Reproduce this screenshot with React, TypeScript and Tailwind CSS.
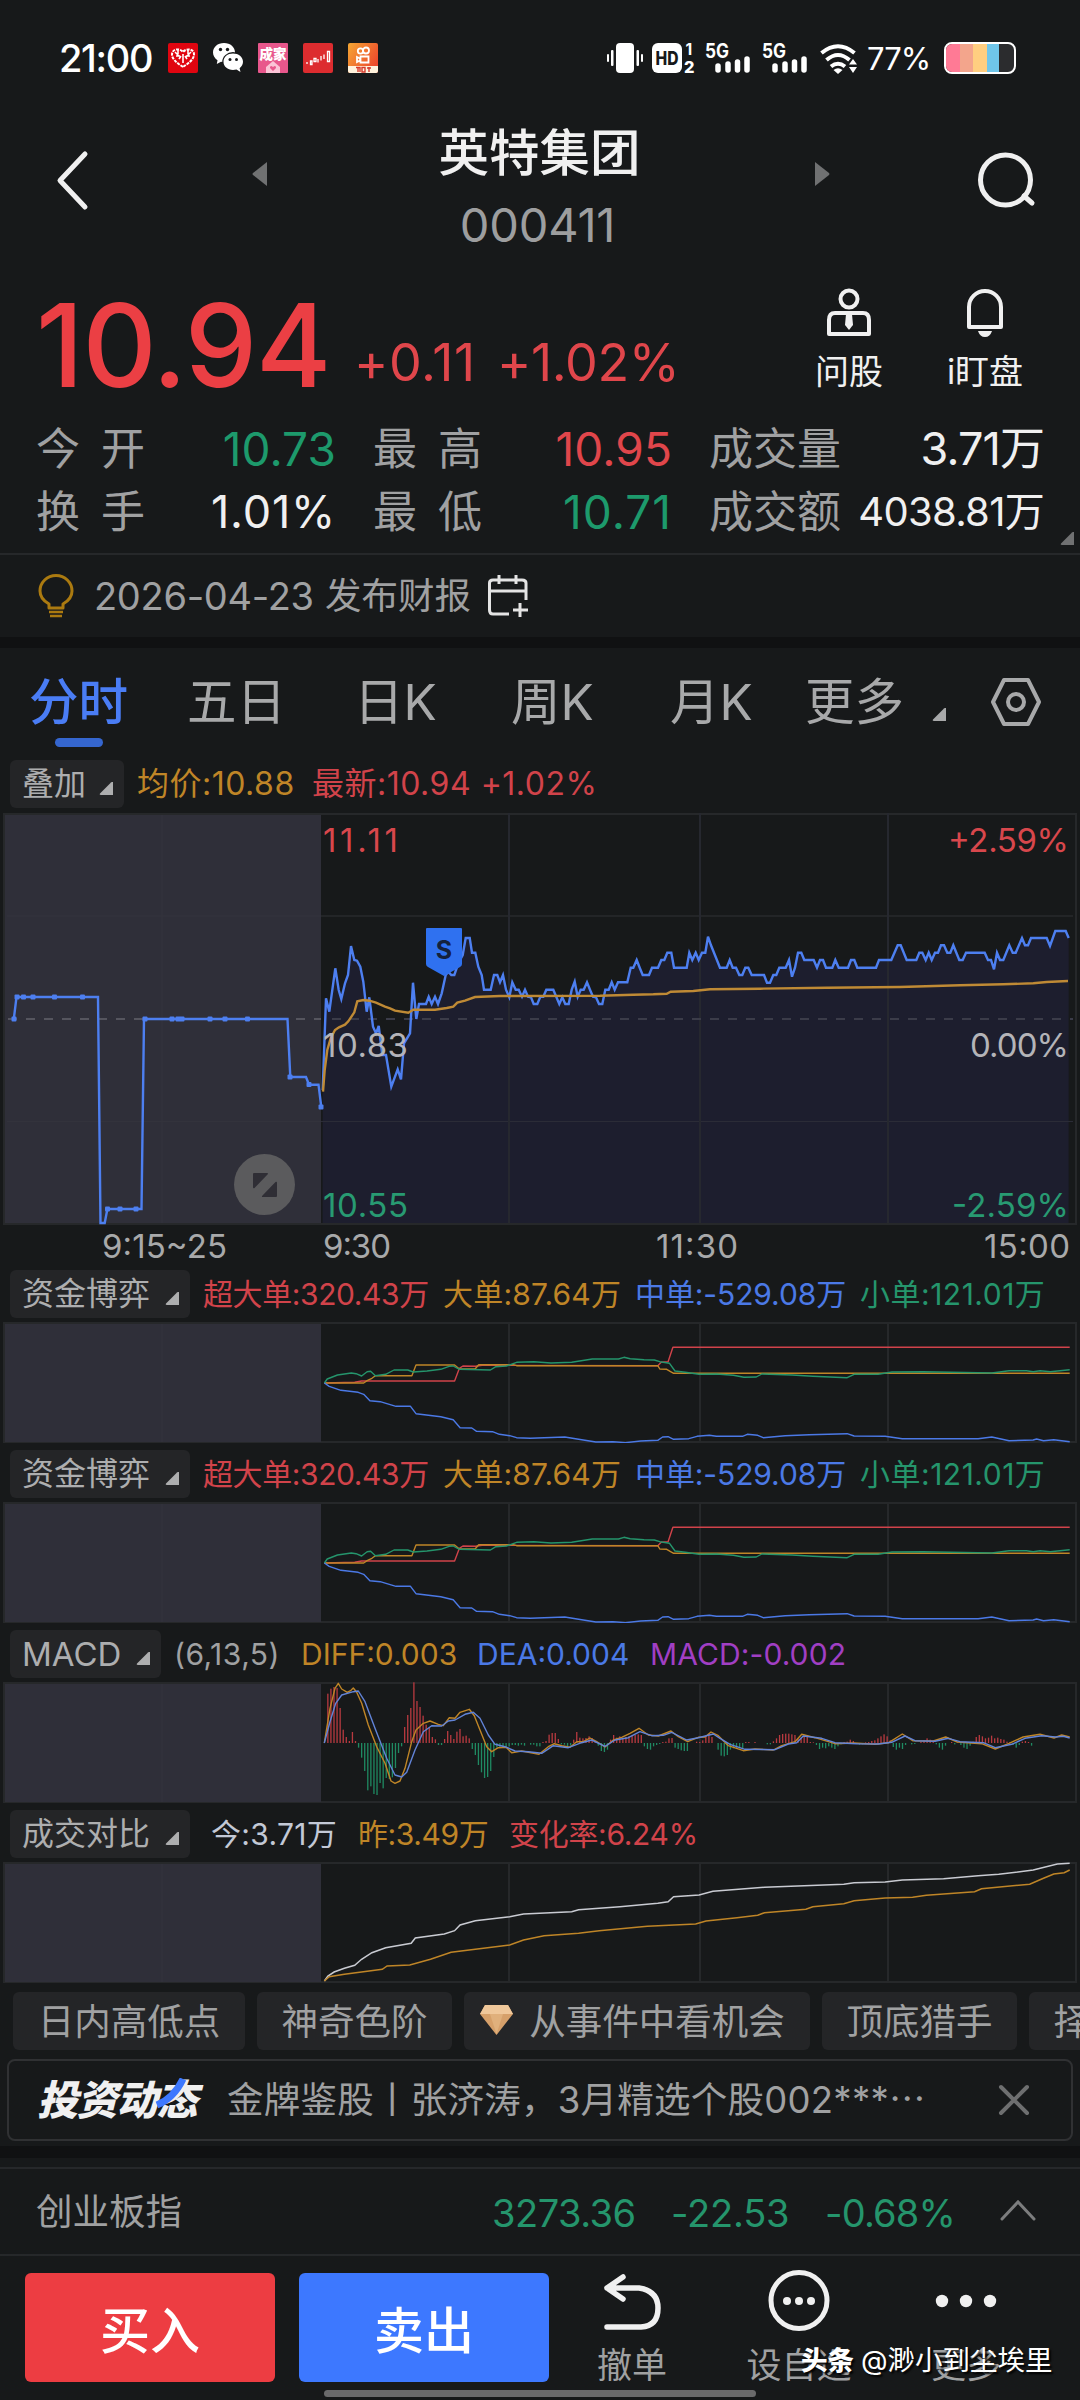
import React from "react";

type Legend = { text: string; className: string };

// Flat [x, y, x, y, ...] list to an svg path, scaled into chart units.
const toPath = (pts: number[], x0: number, sx: number, y0: number, sy: number): string => {
  let d = "";
  for (let i = 0; i < pts.length; i += 2) {
    const x = (x0 + pts[i] * sx).toFixed(1);
    const y = (y0 + pts[i + 1] * sy).toFixed(1);
    d += `${i === 0 ? "M" : "L"}${x} ${y}`;
  }
  return d;
};

const auction = [
  13.8, 206, 16.5, 184, 98, 184, 100.5, 410, 104.7, 410, 107.4, 396, 141.5, 396, 144, 206, 287.5,
  206, 290.3, 264, 306, 264, 309, 271.7, 318.5, 271.7, 321.3, 294,
];

const auctionDots = [
  [14, 206], [17, 184], [23.5, 184], [33, 184], [54.5, 184], [82.5, 184], [107.5, 396],
  [120, 396], [136, 396], [145, 206], [172, 206], [178, 206], [182, 206], [210, 206],
  [225, 206], [247.5, 206], [290, 264], [309, 271.5], [321, 294],
];

const price = [
  68, 870, 78, 595, 88, 635, 106, 505, 116, 570, 124, 597, 135, 550, 144, 525, 153, 438, 163, 480,
  171, 482, 181, 500, 190, 545, 200, 635, 208, 592, 219, 680, 228, 700, 236, 678, 247, 765, 258,
  765, 274, 860, 293, 808, 303, 838, 312, 730, 330, 700, 339, 548, 349, 657, 357, 612, 378, 612,
  386, 590, 395, 612, 405, 590, 414, 612, 425, 580, 437, 525, 445, 515, 454, 525, 463, 525, 475,
  490, 488, 465, 497, 414, 509, 414, 516, 458, 526, 458, 535, 500, 545, 525, 552, 569, 572, 569,
  582, 525, 592, 525, 600, 547, 609, 525, 618, 569, 628, 592, 637, 547, 647, 569, 656, 569, 666,
  590, 675, 569, 684, 590, 693, 592, 701, 612, 712, 612, 721, 590, 730, 590, 739, 569, 760, 569,
  778, 612, 787, 592, 796, 612, 806, 612, 815, 569, 824, 545, 833, 590, 842, 569, 851, 569, 861,
  547, 870, 569, 879, 590, 888, 592, 897, 612, 907, 612, 916, 569, 926, 569, 935, 547, 944, 569,
  954, 547, 982, 547, 992, 503, 1000, 503, 1010, 480, 1019, 503, 1028, 525, 1047, 525, 1056, 503,
  1074, 503, 1084, 480, 1093, 480, 1102, 458, 1114, 458, 1122, 503, 1160, 503, 1168, 458, 1177,
  480, 1187, 458, 1196, 480, 1206, 458, 1216, 458, 1224, 410, 1233, 436, 1242, 458, 1260, 503,
  1280, 503, 1289, 480, 1298, 503, 1308, 503, 1318, 525, 1327, 525, 1336, 503, 1345, 503, 1355,
  525, 1392, 525, 1401, 548, 1410, 548, 1420, 525, 1429, 525, 1438, 503, 1457, 503, 1467, 480,
  1476, 530, 1485, 503, 1494, 458, 1504, 458, 1513, 480, 1541, 480, 1551, 503, 1560, 480, 1569,
  480, 1578, 503, 1597, 503, 1606, 480, 1616, 503, 1644, 503, 1653, 480, 1663, 480, 1672, 503,
  1728, 503, 1737, 480, 1774, 480, 1793, 436, 1802, 436, 1820, 480, 1849, 480, 1858, 458, 1867,
  458, 1877, 480, 1886, 458, 1895, 480, 1905, 458, 1914, 458, 1923, 436, 1932, 436, 1942, 458,
  1951, 458, 1960, 436, 1978, 480, 1988, 480, 1998, 458, 2054, 458, 2064, 480, 2073, 480, 2082,
  508, 2091, 458, 2100, 480, 2110, 480, 2128, 436, 2138, 458, 2147, 458, 2166, 414, 2175, 436,
  2184, 436, 2193, 414, 2240, 414, 2250, 438, 2266, 393, 2297, 393, 2306, 414,
];

const average = [
  69, 875, 74, 810, 82, 750, 92, 715, 105, 690, 117, 682, 135, 674, 145, 664, 163, 637, 172, 604,
  190, 600, 208, 602, 228, 608, 255, 620, 270, 625, 285, 632, 325, 638, 340, 629, 405, 629, 440,
  624, 460, 620, 472, 608, 495, 602, 525, 591, 600, 588, 900, 587, 1000, 584, 1060, 583, 1100, 581,
  1112, 575, 1180, 573, 1230, 568, 1380, 566, 1580, 563, 1800, 561, 1980, 556, 2110, 553, 2200,
  550, 2240, 546, 2304, 543,
];

const flowRed = [
  471, 354, 515, 352, 525, 348, 660, 348, 667, 310, 672, 303, 690, 304, 700, 301, 955, 302, 960,
  292, 970, 290, 977, 247, 1553, 247,
];
const flowOrange = [
  471, 354, 528, 354, 533, 347, 540, 340, 545, 332, 598, 332, 604, 300, 660, 300, 667, 312, 690,
  311, 695, 299, 745, 299, 750, 302, 955, 302, 958, 312, 968, 313, 978, 325, 1553, 325,
];
const flowGreen = [
  471, 354, 475, 342, 490, 330, 510, 324, 517, 326, 525, 333, 533, 320, 538, 319, 545, 332, 560,
  328, 572, 315, 592, 315, 600, 321, 620, 318, 640, 313, 652, 304, 658, 303, 667, 313, 712, 315,
  720, 305, 735, 303, 750, 292, 775, 290, 800, 294, 830, 292, 860, 282, 898, 282, 906, 277, 915,
  281, 935, 284, 950, 285, 958, 290, 972, 295, 980, 318, 995, 322, 1015, 328, 1040, 327, 1065, 331,
  1080, 337, 1098, 336, 1106, 327, 1150, 330, 1180, 334, 1230, 338, 1240, 328, 1275, 328, 1295,
  321, 1340, 320, 1440, 324, 1465, 317, 1490, 317, 1500, 320, 1510, 317, 1525, 320, 1553, 314,
];
const flowBlue = [
  471, 354, 478, 364, 495, 376, 520, 382, 528, 388, 537, 407, 552, 410, 575, 424, 596, 424, 604,
  446, 640, 455, 658, 464, 668, 488, 685, 489, 692, 499, 715, 500, 725, 508, 740, 512, 750, 518,
  770, 520, 820, 516, 840, 523, 865, 531, 890, 530, 908, 533, 930, 528, 955, 526, 962, 516, 970,
  515, 978, 523, 1000, 521, 1012, 514, 1030, 511, 1040, 514, 1078, 514, 1085, 508, 1100, 511, 1108,
  518, 1140, 512, 1175, 509, 1230, 506, 1240, 513, 1285, 514, 1310, 521, 1420, 521, 1440, 516,
  1465, 527, 1500, 525, 1505, 522, 1515, 527, 1530, 524, 1553, 530,
];

const macdBars = [
  148, 163, 168, 165, 105, 40, 18, 6, 33, 6, -14, -44, -84, -142, -130, -153, -156, -120, -136,
  -105, -108, -103, -75, -30, -10, 48, 84, 105, 182, 126, 108, 82, 55, 45, 18, 11, -6, -6, 12, 36,
  24, 12, 34, 42, 20, 22, 14, -18, -36, -66, -88, -105, -102, -84, -42, -14, -14, -10, -12, -10,
  -6, -6, -8, -5, -8, 0, -5, -5, -10, -10, 3, 6, 25, 30, 30, 12, -4, -5, -10, -8, 10, 33, 16, 14,
  15, 20, 15, 5, -8, -24, -27, -20, 10, 24, 16, 20, 15, 18, 20, 22, 24, 26, 24, -10, -18, -20,
  -10, -6, -3, 3, 4, 14, 15, -14, -18, -22, -24, -24, 0, 0, 4, 3, 8, 22, 28, 18, 0, -20, -38, -40,
  -36, -20, -16, -15, -16, -15, 3, 3, 0, 3, 0, 0, 0, -4, -4, 5, 14, 24, 27, 28, 28, 26, 24, 14,
  16, 18, 18, 3, 2, -6, -18, -14, -16, -10, -14, -18, -10, -4, 3, 4, 10, 6, -3, -5, -4, 2, 3, 6, 8,
  14, 20, 26, 20, 8, -12, -20, -14, -18, -6, 0, -4, -3, 0, 4, 8, 14, 10, 3, -4, -14, -20, -8, 0, 3,
  -4, 2, -6, -14, -18, -8, 4, 18, 24, 20, 14, 16, 22, 14, 16, 12, 10, 4, 3, -6, -14, -6, 4, 6, 3,
  -8,
];
const macdDiff = [
  28, 204, 45, 100, 60, 40, 70, 25, 80, 42, 97, 52, 108, 46, 115, 39, 125, 52, 140, 85, 160, 150,
  185, 215, 210, 265, 228, 318, 240, 325, 255, 318, 270, 280, 290, 200, 303, 165, 325, 145, 345,
  138, 370, 148, 385, 152, 403, 128, 420, 130, 435, 112, 463, 103, 478, 122, 495, 165, 515, 215,
  530, 230, 550, 218, 573, 217, 590, 233, 620, 228, 672, 238, 700, 215, 718, 206, 740, 212, 765,
  217, 785, 200, 805, 200, 825, 189, 845, 200, 870, 216, 895, 195, 920, 187, 945, 175, 972, 160,
  1000, 180, 1030, 183, 1068, 168, 1090, 185, 1118, 200, 1150, 187, 1170, 186, 1188, 171, 1210,
  182, 1240, 212, 1285, 227, 1320, 222, 1375, 225, 1400, 212, 1440, 200, 1460, 178, 1500, 188,
  1560, 206, 1617, 204, 1680, 208, 1721, 203, 1762, 177, 1793, 197, 1855, 198, 1892, 186, 1927,
  201, 2000, 206, 2041, 222, 2082, 205, 2124, 186, 2175, 178, 2217, 189, 2240, 180, 2264, 186,
];
const macdDea = [
  28, 204, 45, 140, 62, 85, 80, 60, 115, 50, 130, 48, 150, 80, 180, 160, 215, 250, 240, 300, 260,
  306, 275, 292, 300, 225, 325, 170, 350, 152, 380, 153, 400, 138, 420, 135, 450, 118, 475, 112,
  495, 130, 520, 180, 540, 208, 570, 215, 600, 228, 640, 230, 680, 235, 715, 212, 760, 218, 800,
  203, 830, 195, 870, 214, 900, 195, 940, 188, 975, 170, 1010, 182, 1045, 181, 1070, 172, 1115,
  195, 1150, 188, 1195, 177, 1215, 190, 1245, 208, 1290, 223, 1380, 224, 1420, 207, 1445, 203,
  1465, 183, 1520, 190, 1560, 203, 1625, 206, 1690, 207, 1730, 202, 1770, 183, 1800, 197, 1860,
  199, 1900, 190, 1935, 200, 2005, 203, 2041, 218, 2090, 208, 2130, 190, 2180, 182, 2222, 186,
  2245, 184, 2264, 189,
];

const volToday = [
  471, 1083, 476, 1068, 485, 1056, 500, 1045, 515, 1036, 525, 1018, 540, 998, 560, 983, 597, 970,
  603, 954, 645, 942, 660, 932, 668, 915, 690, 902, 740, 890, 760, 882, 830, 875, 840, 869, 900,
  860, 955, 850, 970, 845, 978, 830, 1015, 825, 1035, 814, 1110, 802, 1225, 793, 1240, 788, 1285,
  786, 1310, 780, 1370, 776, 1420, 767, 1450, 763, 1500, 750, 1535, 732, 1553, 730,
];
const volYesterday = [
  471, 1083, 478, 1070, 500, 1063, 555, 1048, 562, 1038, 595, 1035, 625, 1018, 655, 997, 740, 975,
  760, 960, 790, 947, 840, 940, 870, 932, 940, 919, 1010, 912, 1025, 903, 1070, 893, 1100, 886,
  1110, 878, 1170, 868, 1180, 860, 1225, 851, 1240, 842, 1285, 834, 1325, 832, 1345, 826, 1415,
  815, 1425, 806, 1495, 793, 1515, 775, 1530, 762, 1545, 758, 1553, 750,
];

const RED = "#d1434a";
const ORANGE = "#bf8527";
const BLUE = "#4b79e6";
const GREEN = "#25956c";

const Corner = ({ className }: { className?: string }): JSX.Element => (
  <svg className={className} width="14" height="13" viewBox="0 0 14 13">
    <path d="M14 0V13H2Q0 13 1 11.500L12 .500Q14 -1 14 0Z" fill="currentColor" />
  </svg>
);

const StatusBar = (): JSX.Element => (
  <div className="flex h-[116px] shrink-0 items-center pr-16 pl-[59px] text-white">
    <span className="w-[109px] text-[38px] leading-none font-medium tracking-[-1.300px]">21:00</span>
    <div className="flex gap-[15px]">
      <svg width="30" height="30" viewBox="0 0 30 30">
        <rect width="30" height="30" rx="2" fill="#e00510" />
        <path
          d="M15 24C9 20 4 16 4 11.500C4 5.500 12 5 15 9C18 5 26 5.500 26 11.500C26 16 21 20 15 24Z"
          fill="none" stroke="#fff" strokeWidth="2" strokeDasharray="3 1"
        />
        <path d="M7 9L11 13M10 7V11M8 13H12M11 16L13 13M15 11V20M23 9L19 13M20 7V11M22 13H18M19 16L17 13" stroke="#fff" strokeWidth="1.600" />
      </svg>
      <svg width="30" height="30" viewBox="0 0 30 30">
        <path d="M11 0C4.500 0 0 4.200 0 9.500C0 12.700 1.800 15.400 4.500 17.200L3.800 21L8 18.700C9 18.900 10 19 11 19C17.500 19 22 15 22 9.500C22 4.200 17.500 0 11 0Z" fill="#fff" />
        <ellipse cx="20" cy="19" rx="10.800" ry="10" fill="#17191a" />
        <path d="M20 10.500C14.500 10.500 10.500 14 10.500 18.800C10.500 23.500 14.500 27 20 27C21.200 27 22.400 26.800 23.500 26.500L27.500 29L26.600 25.200C28.800 23.600 30 21.400 30 18.800C30 14 25.500 10.500 20 10.500Z" fill="#fff" />
        <circle cx="7.500" cy="6.500" r="1.700" fill="#17191a" />
        <circle cx="14.500" cy="6.500" r="1.700" fill="#17191a" />
        <circle cx="17" cy="16.500" r="1.500" fill="#17191a" />
        <circle cx="23.500" cy="16.500" r="1.500" fill="#17191a" />
      </svg>
      <svg width="30" height="30" viewBox="0 0 30 30">
        <rect width="30" height="30" rx="1" fill="#e8578c" />
        <text x="15" y="15.500" textAnchor="middle" fontSize="13.500" fontWeight="900" fill="#fff">成家</text>
        <path d="M15 18L22 24V30H8V24Z" fill="#fbc3d6" />
        <path d="M15 28L12 25Q11.500 23 13.500 23L15 24L16.500 23Q18.500 23 18 25Z" fill="#e8578c" />
      </svg>
      <svg width="30" height="30" viewBox="0 0 30 30">
        <rect width="30" height="30" rx="2" fill="#dd2c2f" />
        <path d="M4 19V21M7.500 18H9V21.500H7.500ZM11 15.500H13V18.500H11ZM15 16V19.500M18 13V17.500M21 11.500V16M24.500 8.500H26.500V18.500H24.500Z" fill="none" stroke="#fff" strokeWidth="1.300" />
      </svg>
      <svg width="30" height="30" viewBox="0 0 30 30">
        <defs>
          <linearGradient id="ks" x1="0" y1="0" x2="1" y2=".6">
            <stop offset="0" stopColor="#f5a733" />
            <stop offset="1" stopColor="#ee4a2c" />
          </linearGradient>
        </defs>
        <rect width="30" height="30" rx="2" fill="url(#ks)" />
        <circle cx="12.500" cy="8" r="2.700" fill="none" stroke="#fff" strokeWidth="1.800" />
        <circle cx="18" cy="7.500" r="3" fill="none" stroke="#fff" strokeWidth="1.800" />
        <path d="M12.500 13.500H20.500V19.500H12.500ZM9 14L12 15.500V17.500L9 19Z" fill="none" stroke="#fff" strokeWidth="1.800" />
        <path d="M0 23H30V28Q30 30 28 30H2Q0 30 0 28Z" fill="#fff2dc" />
        <path d="M8 24.500H12V29M10 24.500V29M14 24.500H17V29H14ZM19 25H23M21 24V29" stroke="#d63a2c" strokeWidth="1.400" fill="none" />
      </svg>
    </div>

    <svg className="ml-auto" width="252" height="44" viewBox="606 36 252 44" fill="#fff">
      <rect x="616" y="43" width="18" height="30" rx="4" />
      <rect x="611" y="50" width="2.500" height="16" rx="1" />
      <rect x="607" y="54" width="2" height="8" rx="1" />
      <rect x="636.500" y="50" width="2.500" height="16" rx="1" />
      <rect x="641" y="54" width="2" height="8" rx="1" />
      <rect x="652" y="43" width="30" height="30" rx="6" />
      <text x="655.500" y="65" fontSize="18.500" fontWeight="800" textLength="23" lengthAdjust="spacingAndGlyphs" fill="#17191a">HD</text>
      <text x="685.500" y="54.500" fontSize="15.500" fontWeight="700">1</text>
      <text x="684" y="73" fontSize="16.500" fontWeight="800" textLength="10.500" lengthAdjust="spacingAndGlyphs">2</text>
      <text x="705" y="57.500" fontSize="19.500" fontWeight="700" textLength="24" lengthAdjust="spacingAndGlyphs">5G</text>
      <path d="M718 66V70M728 64V70M737.500 62V70M747 59V70" stroke="#fff" strokeWidth="5.500" strokeLinecap="round" />
      <text x="762" y="57.500" fontSize="19.500" fontWeight="700" textLength="24" lengthAdjust="spacingAndGlyphs">5G</text>
      <path d="M775 66V70M785 64V70M794.500 62V70M804 59V70" stroke="#fff" strokeWidth="5.500" strokeLinecap="round" />
      <path d="M821.500 53Q838 39.500 854.500 53M826.500 60Q838 50 849.500 60M831 66.500Q838 61 845 66.500" fill="none" stroke="#fff" strokeWidth="4" />
      <path d="M833.500 70Q838 66.500 842.500 70L838 74Z" />
      <path d="M853 59L857 64.500H849ZM853 73L857 67H849Z" />
    </svg>
    <span className="ml-[9px] w-[63px] text-[31px] leading-none tracking-[-1px]">77%</span>
    <div className="ml-[14px] flex h-8 w-[72px] overflow-hidden rounded-lg border-2 border-white bg-[#2b2c2e]">
      <i className="w-[14px] bg-[#ff7a95]" />
      <i className="w-[13px] bg-[#f3a58c]" />
      <i className="w-[14px] bg-[#ffce80]" />
      <i className="w-[12px] bg-[#6fc6ea]" />
    </div>
  </div>
);

const Header = (): JSX.Element => (
  <header className="flex h-[150px] shrink-0 items-start px-[42px]">
    <svg className="mt-[29px]" width="60" height="70" viewBox="0 0 60 70">
      <path d="M43 9L18 35.500L43 62" fill="none" stroke="#f0f0f0" strokeWidth="5" strokeLinecap="round" strokeLinejoin="round" />
    </svg>
    <svg className="mt-[45px] ml-[150px]" width="15" height="26" viewBox="0 0 15 26">
      <path d="M15 1V25L1 14Q0 13 1 12Z" fill="#707172" />
    </svg>
    <div className="flex flex-1 flex-col items-center pt-[7px] pr-[3px]">
      <h1 className="text-[50.500px] leading-[60px] font-medium text-[#f0f0f0]">英特集团</h1>
      <span className="mt-[14px] pr-1 text-[47px] leading-[56px] tracking-[-.2px] text-[#9d9e9f]">000411</span>
    </div>
    <svg className="mt-[45px] mr-[142px]" width="15" height="26" viewBox="0 0 15 26">
      <path d="M0 1V25L14 14Q15 13 14 12Z" fill="#707172" />
    </svg>
    <svg className="mt-[33px]" width="66" height="64" viewBox="0 0 66 64">
      <circle cx="33.500" cy="31" r="25" fill="none" stroke="#f0f0f0" strokeWidth="5" />
      <path d="M52 47L60 54" stroke="#f0f0f0" strokeWidth="5" strokeLinecap="round" />
    </svg>
  </header>
);

const Stat = ({ label, value, tone }: { label: string; value: string; tone: string }): JSX.Element => (
  <div className="flex h-[63px] items-center justify-between whitespace-nowrap">
    <span className={`flex text-[44px] leading-none text-[#a0a1a2] ${label.length === 2 ? "gap-[21px]" : ""}`}>
      {label.split("").map((c) => (
        <span key={c}>{c}</span>
      ))}
    </span>
    <span className={`leading-none ${tone}`}>{value}</span>
  </div>
);

const Quote = (): JSX.Element => (
  <section className="flex h-[287px] shrink-0 flex-col px-[36px]">
    <div className="flex h-[151px]">
      <div className="flex items-baseline text-[#eb3f44]">
        <span className="w-[318px] translate-y-[6px] text-[115px] leading-[148px] font-medium tracking-[-1.300px]">10.94</span>
        <span className="w-[143px] text-[52px] tracking-[.6px] text-[#e0464b]">+0.11</span>
        <span className="text-[52px] tracking-[-.4px] text-[#e0464b]">+1.02%</span>
      </div>
      <div className="mr-[-9px] ml-auto flex pt-[22px] text-[34px] leading-none text-[#f0f0f0]">
        <div className="flex w-[136px] flex-col items-center gap-[17px]">
          <svg width="46" height="50" viewBox="0 0 46 50" fill="none" stroke="#f0f0f0" strokeWidth="4">
            <circle cx="23" cy="11" r="8.500" />
            <path d="M9 25H37Q43 25 43 32V46H3V32Q3 25 9 25Z" strokeLinejoin="round" />
            <path d="M20 26H26L27 37L23 42L19 37Z" fill="#f0f0f0" stroke="none" />
          </svg>
          <span>问股</span>
        </div>
        <div className="flex w-[136px] flex-col items-center gap-[17px]">
          <svg width="46" height="50" viewBox="0 0 46 50" fill="none" stroke="#f0f0f0" strokeWidth="4">
            <path d="M7 39V19A16 16 0 0 1 39 19V39Z" strokeLinejoin="round" />
            <path d="M16 43H30Q28 49 23 49Q18 49 16 43Z" fill="#f0f0f0" stroke="none" />
          </svg>
          <span>i盯盘</span>
        </div>
      </div>
    </div>
    <div className="grid grid-cols-[300px_299px_335px] gap-x-[37px]">
      <Stat label="今开" value="10.73" tone="text-[46px] tracking-[.1px] text-[#1d9a6c]" />
      <Stat label="最高" value="10.95" tone="text-[46px] tracking-[.1px] text-[#e0464b]" />
      <Stat label="成交量" value="3.71万" tone="text-[45px] tracking-[-.9px] text-[#f0f0f0]" />
      <Stat label="换手" value="1.01%" tone="text-[45px] tracking-[.8px] text-[#f0f0f0]" />
      <Stat label="最低" value="10.71" tone="text-[46px] tracking-[1px] text-[#1d9a6c]" />
      <Stat label="成交额" value="4038.81万" tone="text-[40px] tracking-[-.700px] text-[#f0f0f0]" />
    </div>
    <Corner className="-mt-[11px] mr-[-30px] ml-auto text-[#707172]" />
  </section>
);

const Notice = (): JSX.Element => (
  <section className="flex h-[84px] shrink-0 items-center border-t-2 border-[#26282a] pl-[37px] whitespace-nowrap text-[#a0a1a2]">
    <svg width="38" height="44" viewBox="0 0 38 44" fill="none" stroke="#ab7a10" strokeWidth="3">
      <path d="M12 34V30Q3 25 3 17A16 15.500 0 0 1 35 17Q35 25 26 30V34Z" strokeLinejoin="round" />
      <path d="M12 38H26M13 42H25" strokeWidth="2.500" />
    </svg>
    <span className="ml-[19px] w-[231px] text-[38px] leading-none tracking-[-.3px]">2026-04-23</span>
    <span className="text-[36.500px] leading-none">发布财报</span>
    <svg className="ml-[16px]" width="42" height="44" viewBox="0 0 42 44" fill="none" stroke="#e4e4e4" strokeWidth="3">
      <path d="M22 40H6Q2.500 40 2.500 36V9Q2.500 6 6 6H35Q39 6 39 9V26M2 17H39M12 1V10M29 1V10M33 29V43M26 36H41" />
    </svg>
  </section>
);

const tabs = [
  { name: "分时", className: "ml-[29px] w-[158px] text-[#4a7df5] font-medium" },
  { name: "五日", className: "w-[167px]" },
  { name: "日K", className: "w-[157px]" },
  { name: "周K", className: "w-[159px]" },
  { name: "月K", className: "w-[135px]" },
  { name: "更多", className: "w-[127px]" },
];

const Tabs = (): JSX.Element => (
  <nav className="h-[111px] shrink-0 pt-[23px] text-[49.500px] text-[#a8a9aa]">
    <div className="flex items-center leading-[62px]">
      {tabs.map((t) => (
        <span key={t.name} className={t.className}>{t.name}</span>
      ))}
      <Corner className="mt-6" />
      <svg className="ml-[44px]" width="52" height="50" viewBox="0 0 52 50" fill="none" stroke="#a8a9aa" strokeWidth="4">
        <path d="M14 3H38L49 25L38 47H14L3 25Z" strokeLinejoin="round" />
        <circle cx="26" cy="25" r="8" />
      </svg>
    </div>
    <div className="mt-[5px] ml-[55px] h-[9px] w-12 rounded-full bg-[#3566cf]" />
  </nav>
);

const Chip = ({ name, size }: { name: string; size: string }): JSX.Element => (
  <span className={`flex h-12 items-center justify-between rounded-md bg-[#242527] pr-[11px] pl-[12px] leading-none text-[#adaeaf] ${size}`}>
    {name}
    <Corner className="mt-[9px]" />
  </span>
);

const grid = [509, 700, 888];

const SubChart = ({ chip, size, legends, children }: {
  chip: string;
  size: string;
  legends: Legend[];
  children: React.ReactNode;
}): JSX.Element => (
  <section className="shrink-0 pb-[5px]">
    <div className="flex h-[54px] items-center pb-[2px] pl-[10px] text-[30px] leading-none whitespace-nowrap">
      <Chip name={chip} size={size} />
      {legends.map((l) => (
        <span key={l.text} className={l.className}>{l.text}</span>
      ))}
    </div>
    <svg className="block" width="1080" height="121" viewBox="0 0 1080 121" fill="none">
      <path d="M4 1H1076V120H4Z" stroke="#26282a" strokeWidth="2" />
      <rect x="5" y="2" width="316" height="118" fill="#2f2f39" />
      <path d="M162 2V120" stroke="#33333c" strokeWidth="1.500" />
      {grid.map((x) => (
        <path key={x} d={`M${x} 0V120`} stroke="#26282a" strokeWidth="2" />
      ))}
      {children}
    </svg>
  </section>
);

const K = 1080 / 1568;

const FlowLines = (): JSX.Element => (
  <g strokeWidth="1.400" strokeLinejoin="round">
    <path d={toPath(flowRed, 0, K, -57, 1 / 3)} stroke={RED} />
    <path d={toPath(flowOrange, 0, K, -57, 1 / 3)} stroke={ORANGE} />
    <path d={toPath(flowGreen, 0, K, -57, 1 / 3)} stroke={GREEN} />
    <path d={toPath(flowBlue, 0, K, -57, 1 / 3)} stroke={BLUE} />
  </g>
);

const flowLegends: Legend[] = [
  { text: "超大单:320.43万", className: "ml-[13px] w-[240px] text-[#d1434a] tracking-[-.4px]" },
  { text: "大单:87.64万", className: "w-[192px] text-[#bf8527] tracking-[.2px]" },
  { text: "中单:-529.08万", className: "w-[225px] text-[#4b79e6] tracking-[-.1px]" },
  { text: "小单:121.01万", className: "text-[#25956c] tracking-[.5px]" },
];

const PriceChart = (): JSX.Element => {
  const line = toPath(price, 300, 1 / 3, -13, 1 / 3);
  return (
    <section className="relative h-[455px] shrink-0">
      <svg className="block" width="1080" height="455" viewBox="0 0 1080 455" fill="none" fontSize="33">
        <path d="M4 1H1076V411H4Z" stroke="#26282a" strokeWidth="2" />
        <path d={`${line}L1068.600 411H322.600Z`} fill="#1d1e2e" />
        <rect x="5" y="2" width="316" height="409" fill="#2f2f39" />
        <path d="M7 103H321M7 308.500H321M162 2V410" stroke="#33333c" strokeWidth="1.500" />
        <path d="M321 103H1073" stroke="#303234" strokeWidth="1.200" />
        <path d="M321 308.500H1073" stroke="#2b2c37" strokeWidth="1.200" />
        {grid.map((x) => (
          <path key={x} d={`M${x} 0V410`} stroke="#26282f" strokeWidth="2" />
        ))}
        <path d="M4 411H1076" stroke="#26282a" strokeWidth="2" />
        <path d="M8 206H321" stroke="#55555e" strokeWidth="2" strokeDasharray="9 9" />
        <path d="M332 206H1073" stroke="#3b3c49" strokeWidth="2" strokeDasharray="9 9" />
        <path d={toPath(auction, 0, 1, 0, 1)} stroke="#4d7ff0" strokeWidth="2.400" />
        {auctionDots.map(([x, y]) => (
          <rect key={`${x}-${y}`} x={x - 2.5} y={y - 2.5} width="5" height="5" rx="1" fill="#4d7ff0" />
        ))}
        <path d={line} stroke="#4d7ff0" strokeWidth="2.400" />
        <path d={toPath(average, 300, 1 / 3, -13, 1 / 3)} stroke="#bf8a35" strokeWidth="2.400" />
        <path d="M427 115H461Q462 115 462 116V151Q462 153 460 154L444 163L428 154Q426 153 426 151V116Q426 115 427 115Z" fill="#2f71f0" />
        <text x="444" y="146" textAnchor="middle" fontSize="25" fontWeight="700" fill="#14213d">S</text>
        <text x="323" y="39" textLength="75" fill="#d8474c">11.11</text>
        <text x="323" y="244" textLength="85" fill="#b4b4b8">10.83</text>
        <text x="323" y="404" textLength="85" fill="#289a72">10.55</text>
        <text x="948" y="39" textLength="121" fill="#d8474c">+2.59%</text>
        <text x="970" y="244" textLength="99" fill="#b4b4b8">0.00%</text>
        <text x="952" y="404" textLength="117" fill="#289a72">-2.59%</text>
        <g fill="#a8a9aa">
          <text x="102" y="445" textLength="125">9:15~25</text>
          <text x="323" y="445" textLength="68">9:30</text>
          <text x="656" y="445" textLength="82">11:30</text>
          <text x="984" y="445" textLength="86">15:00</text>
        </g>
      </svg>
      <button className="absolute top-[341px] left-[234px] flex h-[61px] w-[61px] items-center justify-center rounded-full bg-[#5b5b5d]">
        <svg width="26" height="26" viewBox="0 0 26 26" fill="#2f2e35">
          <path d="M2 1H15Q17 1 15.500 2.500L2.500 16Q1 17 1 15V2Q1 1 2 1Z" />
          <path d="M24 25H11Q9 25 10.500 23.500L23.500 10Q25 9 25 11V24Q25 25 24 25Z" />
        </svg>
      </button>
    </section>
  );
};

const tagClass = "flex h-[58px] shrink-0 items-center justify-center rounded-md bg-[#242527] pt-[2px]";

const Tags = (): JSX.Element => (
  <div className="flex h-[71px] shrink-0 gap-3 overflow-hidden pt-[4px] pl-[13px] text-[36.500px] leading-none text-[#a0a1a2]">
    <span className={`${tagClass} w-[232px]`}>日内高低点</span>
    <span className={`${tagClass} w-[195px]`}>神奇色阶</span>
    <span className={`${tagClass} w-[346px] gap-[15px] pr-[10px]`}>
      <svg className="-mt-[4px]" width="35" height="32" viewBox="0 0 35 32">
        <path d="M6 1H29L34 10L17.500 31L1 10Z" fill="#d6a06a" />
        <path d="M6 1H29L34 10H1Z" fill="#efc79a" />
        <path d="M11 10H24L17.500 30Z" fill="#e0b07c" />
      </svg>
      从事件中看机会
    </span>
    <span className={`${tagClass} w-[195px]`}>顶底猎手</span>
    <span className={`${tagClass} w-[195px]`}>择时擒牛</span>
  </div>
);

const Promo = (): JSX.Element => (
  <div className="mx-[7px] flex h-[82px] shrink-0 items-center rounded-lg border-2 border-[#303133] pl-[28px] whitespace-nowrap">
    <span className="relative w-[190px] text-[41px] leading-none font-black tracking-[-1.200px] text-[#f0f0f0] italic">
      投资动态
      <svg className="absolute top-[-2px] left-[117px]" width="36" height="32" viewBox="0 0 36 32">
        <path d="M29 1Q20 20 3 27" fill="none" stroke="#3d78ff" strokeWidth="7" />
      </svg>
    </span>
    <span className="text-[36.500px] leading-none tracking-[.250px] text-[#a0a1a2]">
      金牌鉴股丨张济涛，3月精选个股002***⋯
    </span>
    <svg className="mr-[41px] ml-auto" width="32" height="32" viewBox="0 0 32 32">
      <path d="M3 3L29 29M29 3L3 29" stroke="#6e6f70" strokeWidth="4" strokeLinecap="round" />
    </svg>
  </div>
);

const IndexRow = (): JSX.Element => (
  <div className="flex h-[89px] shrink-0 items-center border-y-2 border-[#26282a] pt-[2px] pl-[36px] text-[38px] leading-none text-[#25956c]">
    <span className="w-[456px] text-[36.500px] text-[#a0a1a2]">创业板指</span>
    <span className="w-[179px] tracking-[-.5px]">3273.36</span>
    <span className="w-[154px] tracking-[-.2px]">-22.53</span>
    <span className="tracking-[-.8px]">-0.68%</span>
    <svg className="mr-[43px] ml-auto -mt-[5px]" width="38" height="24" viewBox="0 0 38 24">
      <path d="M3 21L19 4L35 21" fill="none" stroke="#7c7d7e" strokeWidth="3" strokeLinecap="round" />
    </svg>
  </div>
);

const Footer = (): JSX.Element => (
  <footer className="relative flex flex-1 pt-[17px] pl-[25px]">
    <button className="flex h-[109px] w-[250px] items-center justify-center rounded-md bg-[#ed3d42] pt-[7px] text-[50px] leading-none font-medium text-white">买入</button>
    <button className="ml-[24px] flex h-[109px] w-[250px] items-center justify-center rounded-md bg-[#3d78ff] pt-[7px] text-[50px] leading-none font-medium text-white">卖出</button>
    <div className="ml-[14px] flex text-[35px] leading-none text-[#a0a1a2]">
      <div className="flex w-[138px] flex-col items-center">
        <svg width="62" height="62" viewBox="0 0 62 62" fill="none" stroke="#f0f0f0" strokeWidth="5.500" strokeLinecap="round" strokeLinejoin="round">
          <path d="M22 4L6 15L22 26M6 15H38Q57 18 57 35Q57 53 40 54H6" />
        </svg>
        <span className="mt-[13px]">撤单</span>
      </div>
      <div className="flex w-[196px] flex-col items-center">
        <svg className="overflow-visible" width="62" height="62" viewBox="0 0 62 62">
          <circle cx="31" cy="27.500" r="28" fill="none" stroke="#f0f0f0" strokeWidth="5" />
          <g fill="#f0f0f0">
            <circle cx="19" cy="28" r="4" />
            <circle cx="31" cy="28" r="4" />
            <circle cx="43" cy="28" r="4" />
          </g>
        </svg>
        <span className="mt-[13px]">设自选</span>
      </div>
      <div className="flex w-[138px] flex-col items-center">
        <svg width="62" height="62" viewBox="0 0 62 62" fill="#f0f0f0">
          <circle cx="7" cy="28" r="6.200" />
          <circle cx="31" cy="28" r="6.200" />
          <circle cx="55" cy="28" r="6.200" />
        </svg>
        <span className="mt-[13px]">更多</span>
      </div>
    </div>
    <div className="absolute top-[87px] left-[801px] flex items-center text-[27.500px] leading-[34px] whitespace-nowrap text-white [text-shadow:2px_2px_2px_#000]">
      <b className="w-[60px] text-[26.500px] font-black">头条</b>
      @渺小到尘埃里
    </div>
    <div className="absolute bottom-[3px] left-[324px] h-[7px] w-[432px] rounded-full bg-[#6a6a6b]" />
  </footer>
);

const App = (): JSX.Element => {
  return (
    <main className="flex h-[2400px] w-[1080px] flex-col overflow-hidden bg-[#17191a] font-['Inter','Noto_Sans_CJK_SC',sans-serif]">
      <StatusBar />
      <Header />
      <Quote />
      <Notice />
      <div className="h-[11px] shrink-0 bg-[#101112]" />
      <Tabs />
      <div className="flex h-[54px] shrink-0 items-center pb-[5px] pl-[10px] text-[32px] leading-none whitespace-nowrap">
        <Chip name="叠加" size="w-[114px] text-[32px]" />
        <span className="ml-[13px] w-[175px] tracking-[.5px] text-[#bf8527]">均价:10.88</span>
        <span className="tracking-[.5px] text-[#d1434a]">最新:10.94 +1.02%</span>
      </div>
      <PriceChart />
      <SubChart chip="资金博弈" size="w-[180px] text-[32px]" legends={flowLegends}>
        <FlowLines />
      </SubChart>
      <SubChart chip="资金博弈" size="w-[180px] text-[32px]" legends={flowLegends}>
        <FlowLines />
      </SubChart>
      <SubChart
        chip="MACD"
        size="w-[151px] text-[33px]"
        legends={[
          { text: "(6,13,5)", className: "ml-[13px] w-[127px] text-[#a0a1a2] tracking-[.5px]" },
          { text: "DIFF:0.003", className: "w-[176px] text-[#bf8527]" },
          { text: "DEA:0.004", className: "w-[173px] text-[#4b79e6]" },
          { text: "MACD:-0.002", className: "text-[#a13fc4] tracking-[.1px]" },
        ]}
      >
        {macdBars.map((v, i) => (
          <rect
            key={i}
            x={327.2 + i * 3.073}
            y={v > 0 ? 61 - v / 3 : 61}
            width="1.300"
            height={Math.abs(v) / 3}
            fill={v > 0 ? "#b93a40" : "#1f8a62"}
          />
        ))}
        <path d={toPath(macdDiff, 315, 1 / 3, -7, 1 / 3)} stroke={ORANGE} strokeWidth="1.400" strokeLinejoin="round" />
        <path d={toPath(macdDea, 315, 1 / 3, -7, 1 / 3)} stroke="#6284d8" strokeWidth="1.400" strokeLinejoin="round" />
      </SubChart>
      <SubChart
        chip="成交对比"
        size="w-[180px] text-[32px]"
        legends={[
          { text: "今:3.71万", className: "ml-[21px] w-[147px] text-[#c3c9d6] tracking-[.3px]" },
          { text: "昨:3.49万", className: "w-[151px] text-[#bf8527] tracking-[-.4px]" },
          { text: "变化率:6.24%", className: "text-[#d1434a] tracking-[-.3px]" },
        ]}
      >
        <path d={toPath(volToday, 0, K, -242, 1 / 3)} stroke="#c9cbd2" strokeWidth="1.500" />
        <path d={toPath(volYesterday, 0, K, -242, 1 / 3)} stroke={ORANGE} strokeWidth="1.500" />
      </SubChart>
      <Tags />
      <Promo />
      <div className="mt-[5px] mb-[9px] h-[12px] shrink-0 bg-[#101112]" />
      <IndexRow />
      <Footer />
    </main>
  );
};

export default App;
